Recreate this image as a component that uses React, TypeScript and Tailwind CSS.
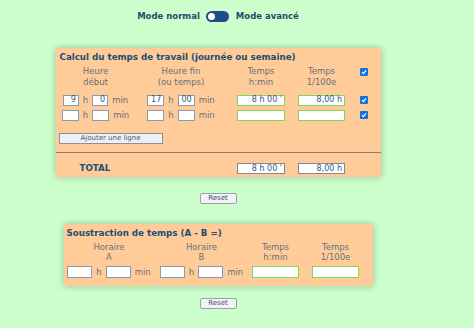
import React from "react"

const font = { fontFamily: '"DejaVu Sans", Verdana, sans-serif' }

function Box({ w, h = "h-[11px]", green, grey, value }: { w: string; h?: string; green?: boolean; grey?: boolean; value?: string }) {
    const border = green ? "border-[#86d45a]" : grey ? "border-[#7f8a96]" : "border-[#8a9bb0]"
    return (
        <div className={`${w} ${h} ${border} border bg-white flex items-center justify-end pr-[2px] text-[8px] leading-none text-[#34568a]`}>
            {value}
        </div>
    )
}

function Check() {
    return (
        <div className="w-[8px] h-[8px] rounded-[1px] bg-[#1a6fe0] flex items-center justify-center">
            <svg width="6" height="6" viewBox="0 0 6 6">
                <path d="M1 3.2 L2.4 4.6 L5 1.4" stroke="white" strokeWidth="1.2" fill="none" />
            </svg>
        </div>
    )
}

function HM({ w, h, a, b }: { w: string; h?: string; a?: string; b?: string }) {
    return (
        <div className="flex items-center gap-[4px] text-[8.5px] text-[#65717d]">
            <Box w={w} h={h} value={a} />
            <span>h</span>
            <Box w={w} h={h} value={b} />
            <span>min</span>
        </div>
    )
}

const cols1 = "grid grid-cols-[80px_91px_69px_52px_33px] items-center justify-items-center"
const cols2 = "grid grid-cols-[91px_94px_54px_66px] items-center justify-items-center"

function ResetBtn() {
    return (
        <div className="w-[37px] h-[11px] border border-[#9aa0a8] bg-[#f3f3f5] rounded-[2px] flex items-center justify-center text-[7px] text-[#3d4f78]">
            Reset
        </div>
    )
}

export default function App() {
    return (
        <div className="min-h-screen w-full bg-[#ccffcc]" style={font}>
            <div className="w-[436px] flex flex-col items-center pt-[11px] pb-[20px]">
                <div className="flex items-center h-[11px] text-[8.5px] font-bold text-[#1d4e72]">
                    <span>Mode normal</span>
                    <div className="ml-[6px] mr-[7px] w-[23px] h-[11px] rounded-full bg-[#1b4f8a] flex items-center pl-[2px]">
                        <div className="w-[7px] h-[7px] rounded-full bg-white" />
                    </div>
                    <span>Mode avancé</span>
                </div>

                <div className="mt-[26px] w-[325px] bg-[#ffcc99] shadow-[0_0_7px_rgba(60,100,60,0.4)] pb-[4px]">
                    <div className="h-[18px] leading-[18px] pl-[4px] text-[8.7px] font-bold text-[#1d4e72]">
                        Calcul du temps de travail (journée ou semaine)
                    </div>
                    <div className={`${cols1} items-start h-[22px] text-[8.5px] leading-[11px] text-[#65717d] text-center`}>
                        <div>Heure<br />début</div>
                        <div>Heure fin<br />(ou temps)</div>
                        <div>Temps<br />h:min</div>
                        <div>Temps<br />1/100e</div>
                        <div className="pt-[2px]"><Check /></div>
                    </div>
                    <div className={`${cols1} mt-[6px] h-[11px]`}>
                        <HM w="w-[16px]" a="9" b="0" />
                        <HM w="w-[17px]" a="17" b="00" />
                        <Box w="w-[48px]" green value="8 h 00 '" />
                        <Box w="w-[47px]" green value="8,00 h" />
                        <Check />
                    </div>
                    <div className={`${cols1} mt-[4px] h-[11px]`}>
                        <HM w="w-[17px]" />
                        <HM w="w-[17px]" />
                        <Box w="w-[48px]" green />
                        <Box w="w-[47px]" green />
                        <Check />
                    </div>
                    <div className="mt-[13px] ml-[3px] w-[104px] h-[11px] border border-[#8c9096] bg-[#eef0f3] flex items-center justify-center text-[7px] text-[#445a80]">
                        Ajouter une ligne
                    </div>
                    <div className="mt-[8px] border-t border-[#8d7e6c]" />
                    <div className={`${cols1} mt-[9px] h-[11px]`}>
                        <div className="justify-self-start pl-[24px] text-[8.7px] font-bold text-[#1d4e72]">TOTAL</div>
                        <div />
                        <Box w="w-[48px]" grey value="8 h 00 '" />
                        <Box w="w-[47px]" grey value="8,00 h" />
                        <div />
                    </div>
                </div>

                <div className="mt-[16px]"><ResetBtn /></div>

                <div className="mt-[20px] w-[309px] bg-[#ffcc99] shadow-[0_0_7px_rgba(60,100,60,0.4)] pb-[8px]">
                    <div className="h-[18px] leading-[18px] pl-[3px] text-[8.7px] font-bold text-[#1d4e72]">
                        Soustraction de temps (A - B =)
                    </div>
                    <div className={`${cols2} items-start h-[20px] text-[8.5px] leading-[10px] text-[#65717d] text-center`}>
                        <div>Horaire<br />A</div>
                        <div>Horaire<br />B</div>
                        <div>Temps<br />h:min</div>
                        <div>Temps<br />1/100e</div>
                    </div>
                    <div className={`${cols2} mt-[4px] h-[12px]`}>
                        <HM w="w-[25px]" h="h-[12px]" />
                        <HM w="w-[25px]" h="h-[12px]" />
                        <Box w="w-[47px]" h="h-[12px]" green />
                        <Box w="w-[47px]" h="h-[12px]" green />
                    </div>
                </div>

                <div className="mt-[12px]"><ResetBtn /></div>
            </div>
        </div>
    )
}
